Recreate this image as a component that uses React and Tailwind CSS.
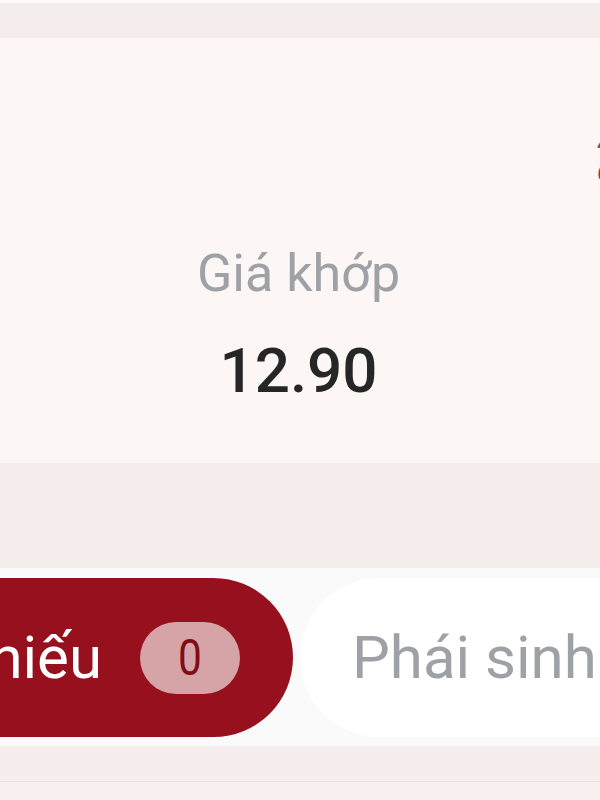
export default function App() {
  return (
    <div className="w-[600px] h-[800px] overflow-hidden flex flex-col bg-[#f7efed] font-['Roboto',sans-serif]">
      <div className="h-[3px] bg-[#fdfaf9]" />
      <div className="h-[35px] bg-[#f5edeb]" />

      <div className="h-[425px] shrink-0 flex bg-[#fcf6f5] overflow-hidden">
        <div className="w-[597px] shrink-0 flex flex-col items-center pt-[210px]">
          <p className="text-[52px] leading-none text-[#9ea1a5]">Giá khớp</p>
          <p className="mt-[40px] text-[62px] leading-none font-medium text-[#262626]">12.90</p>
        </div>
        <div className="pt-[95px] flex flex-col gap-[8px] text-[22px] leading-none text-[#555]">
          <span>4</span>
          <span>6</span>
        </div>
      </div>

      <div className="h-[105px] shrink-0 bg-[#f6eeec]" />

      <div className="h-[178px] shrink-0 bg-[#fafafa] pt-[10px] flex gap-[7px] shadow-[0_4px_6px_rgba(120,80,80,0.08)]">
        <div className="w-[293px] h-[159px] shrink-0 rounded-r-full bg-[#96111d] flex items-center justify-end gap-[38px] pr-[53px] whitespace-nowrap">
          <span className="shrink-0 text-[60px] leading-none text-white">Cổ phiếu</span>
          <span className="shrink-0 w-[100px] h-[72px] rounded-full bg-[#d6a3a6] flex items-center justify-center">
            <span className="inline-block text-[50px] leading-none text-[#7e0d18] scale-x-[0.85]">0</span>
          </span>
        </div>
        <div className="flex-1 h-[159px] rounded-l-full bg-white flex items-center pl-[52px] whitespace-nowrap">
          <span className="text-[60px] leading-none text-[#9ea1a5]">Phái sinh</span>
        </div>
      </div>

      <div className="h-[35px] shrink-0 bg-[#f6eeec]" />
      <div className="flex-1 border-t border-[#ede1df] bg-[#f8f0ee]" />
    </div>
  )
}
